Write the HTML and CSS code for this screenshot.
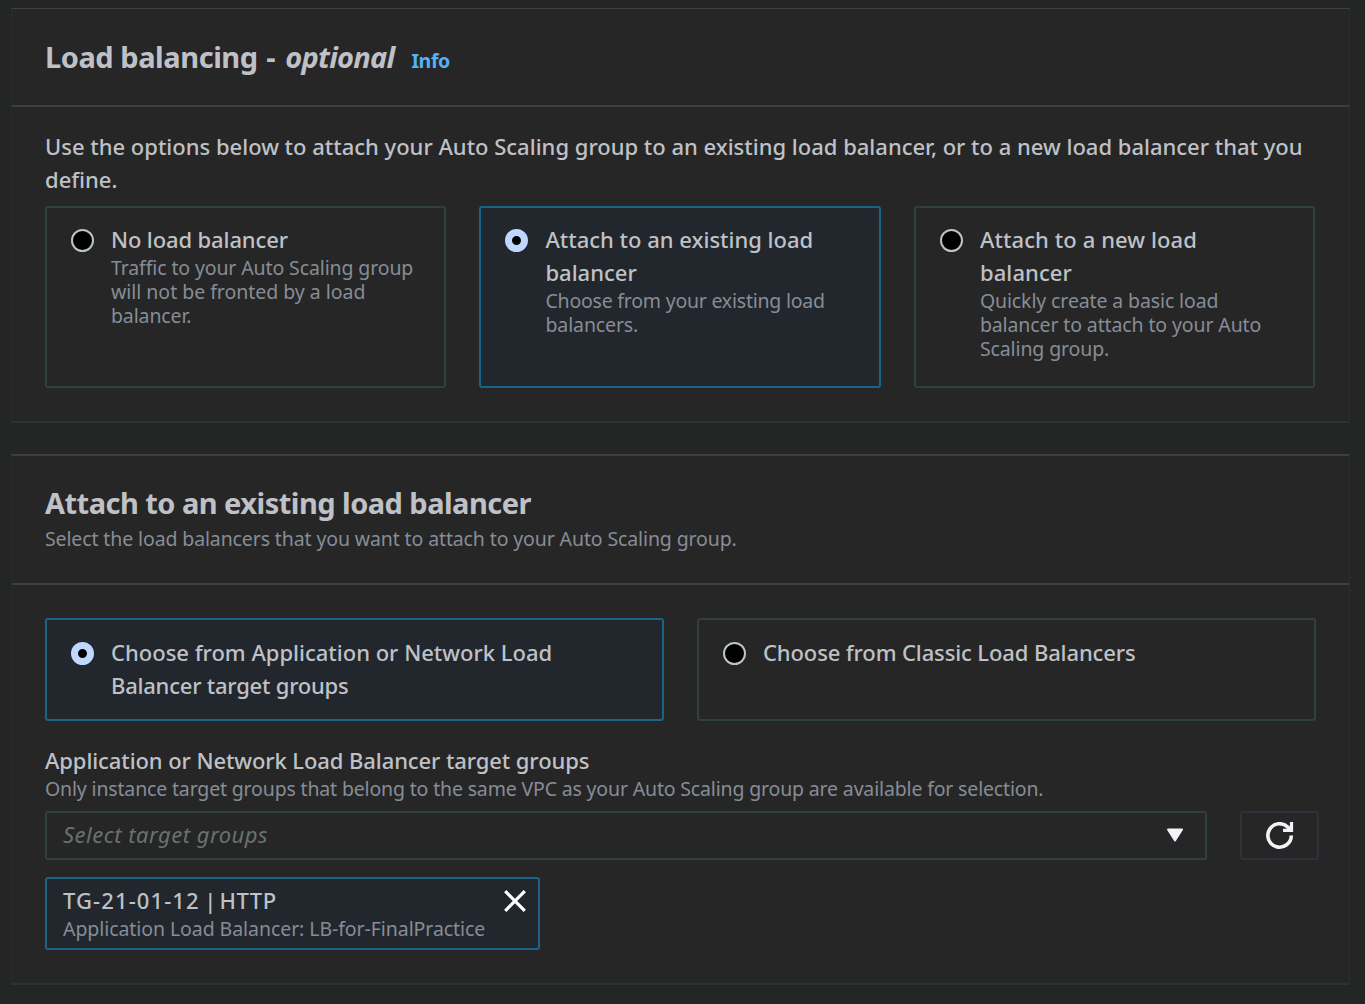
FILE: index.html
```html
<!DOCTYPE html>
<html lang="en">
<head>
<meta charset="utf-8">
<title>Load balancing</title>
<link rel="stylesheet" href="styles.css">
</head>
<body>
<section class="panel panel-first">
  <header class="panel-header">
    <h2 class="heading"><span class="h-main">Load balancing</span><span class="h-dash"> - </span><em class="h-opt">optional</em></h2>
    <a class="info">Info</a>
  </header>
  <div class="panel-body">
    <p class="text intro">Use the options below to attach your Auto Scaling group to an existing load balancer, or to a new load balancer that you<br>define.</p>
    <div class="tiles three">
      <label class="tile">
        <span class="radio"></span>
        <span class="tile-content"><span class="text snug">No load balancer</span><span class="small">Traffic to your Auto Scaling group<br><span class="even">will not be fronted by a load</span><br>balancer.</span></span>
      </label>
      <label class="tile selected">
        <span class="radio"></span>
        <span class="tile-content"><span class="text">Attach to an existing load<br>balancer</span><span class="small"><span class="tight">Choose from your existing load</span><br>balancers.</span></span>
      </label>
      <label class="tile">
        <span class="radio"></span>
        <span class="tile-content"><span class="text loose">Attach to a new load<br>balancer</span><span class="small">Quickly create a basic load<br>balancer to attach to your Auto<br>Scaling group.</span></span>
      </label>
    </div>
  </div>
</section>
<section class="panel panel-second">
  <header class="panel-header stacked">
    <h2 class="heading h-attach">Attach to an existing load balancer</h2>
    <p class="small">Select the load balancers that you want to attach to your Auto Scaling group.</p>
  </header>
  <div class="panel-body">
    <div class="tiles two">
      <label class="tile selected">
        <span class="radio"></span>
        <span class="tile-content"><span class="text">Choose from Application or Network Load<br><span class="tight">Balancer target groups</span></span></span>
      </label>
      <label class="tile">
        <span class="radio"></span>
        <span class="tile-content"><span class="text snug">Choose from Classic Load Balancers</span></span>
      </label>
    </div>
    <div class="field">
      <div class="text label">Application or Network Load Balancer target groups</div>
      <div class="small hint">Only instance target groups that belong to the same VPC as your Auto Scaling group are available for selection.</div>
      <div class="control">
        <div class="select">
          <span class="placeholder">Select target groups</span>
          <svg class="caret" width="18" height="15" viewBox="0 0 18 15"><path d="M2 1.5H16L9 12.5Z" fill="#f2f3f8" stroke="#f2f3f8" stroke-width="2" stroke-linejoin="round"/></svg>
        </div>
        <button class="refresh" aria-label="Refresh">
          <svg width="28" height="28" viewBox="0 0 28 28" fill="none" stroke="#f2f3f8" stroke-width="3.6"><path d="M25.3 13.5A11.7 11.7 0 1 1 22 5.3L24.3 8.1"/><path d="M17 8.3H25.5V0" stroke-width="3.2"/></svg>
        </button>
      </div>
      <div class="token">
        <div><div class="text"><span class="token-id">TG-21-01-12</span><span class="token-sep"> | </span><span class="token-proto">HTTP</span></div><div class="small token-detail">Application Load Balancer: LB-for-FinalPractice</div></div>
        <svg class="close" width="22" height="22" viewBox="0 0 22 22"><path d="M1.2 1.2L20.8 20.8M20.8 1.2L1.2 20.8" stroke="#fff" stroke-width="3.2"/></svg>
      </div>
    </div>
  </div>
</section>
</body>
</html>
```
FILE: styles.css
```css
* { box-sizing: border-box; }
body {
  margin: 0;
  padding: 8px 15px 0 11px;
  min-height: 1004px;
  background: #232625;
  color: #bfc1c6;
  font-family: "Noto Sans", "Open Sans", sans-serif;
}
h2, p { margin: 0; font-weight: inherit; }
.panel {
  background: #262626;
  border: 1px solid #292e2f;
  border-bottom: 2px solid #2a3335;
}
.panel-first { border-top: 1px solid #3c403f; height: 415px; }
.panel-second { border-top: 2px solid #3c403f; height: 531px; margin-top: 31px; }
.panel-header {
  display: flex;
  align-items: baseline;
  height: 98px;
  padding: 28px 33px 0;
  border-bottom: 2px solid #3c403f;
}
.panel-header.stacked { display: block; height: 129px; padding-top: 27px; }
.stacked .small { margin-top: 4px; }
.heading { font-size: 29px; line-height: 40px; font-weight: 700; white-space: pre; }
.h-main { letter-spacing: -0.45px; }
.h-dash { letter-spacing: 1.1px; }
.h-opt { letter-spacing: -0.75px; }
.h-attach { letter-spacing: -0.53px; }
.info { margin-left: 17px; font-size: 19.5px; font-weight: 700; letter-spacing: -0.4px; color: #55b1f7; }
.panel-body { padding: 23px 33px 0; white-space: nowrap; }
.panel-second .panel-body { padding-top: 33px; }
.text { display: block; font-size: 22px; line-height: 33px; font-weight: 500; }
.small { display: block; font-size: 19.5px; line-height: 24px; letter-spacing: -0.12px; color: #868d97; }
.snug { letter-spacing: -0.12px; }
.label { letter-spacing: -0.09px; }
.even { letter-spacing: -0.03px; }
.loose { letter-spacing: 0.1px; }
.tight { letter-spacing: -0.22px; }
.hint { letter-spacing: -0.16px; }
.tiles { display: grid; gap: 33px; }
.three { grid-template-columns: repeat(3, 1fr); grid-auto-rows: 182px; width: 1270.4px; margin-top: 10px; }
.two { grid-template-columns: repeat(2, 1fr); grid-auto-rows: 103px; width: 1271px; }
.tile {
  display: flex;
  gap: 17px;
  padding: 15px 24px;
  border: 2px solid #323f40;
  border-radius: 3px;
}
.two .tile { padding-top: 16px; }
.selected { background: #21272d; border-color: #1b6389; }
.radio {
  flex: none;
  width: 23px;
  height: 23px;
  margin-top: 6px;
  border: 2px solid #bcc5c5;
  border-radius: 50%;
  background: #000;
}
.selected .radio { border: 7px solid #c0d7fd; }
.field { padding-top: 23px; }
.control { display: flex; gap: 33px; width: 1274px; margin-top: 10px; }
.select {
  display: flex;
  align-items: center;
  justify-content: space-between;
  width: 1162px;
  height: 49px;
  padding: 0 21px 0 16px;
  border: 2px solid #323f40;
  border-radius: 3px;
}
.placeholder { padding-bottom: 3px; font-size: 22px; font-style: italic; letter-spacing: 0.49px; color: #68726f; }
.refresh {
  display: flex;
  align-items: center;
  justify-content: center;
  width: 79px;
  height: 49px;
  padding: 0;
  background: none;
  border: 2px solid #2c323b;
  border-radius: 3px;
}
.token {
  display: flex;
  justify-content: space-between;
  width: 495px;
  height: 73px;
  margin-top: 17px;
  padding: 5px 12px 0 16px;
  background: #21272d;
  border: 2px solid #1b6389;
  border-radius: 3px;
}
.token-id { letter-spacing: 1.1px; }
.token-sep { letter-spacing: -1.3px; }
.token-proto { letter-spacing: 0.6px; }
.token-detail { letter-spacing: -0.07px; }
.close { margin-top: 6px; }
```
